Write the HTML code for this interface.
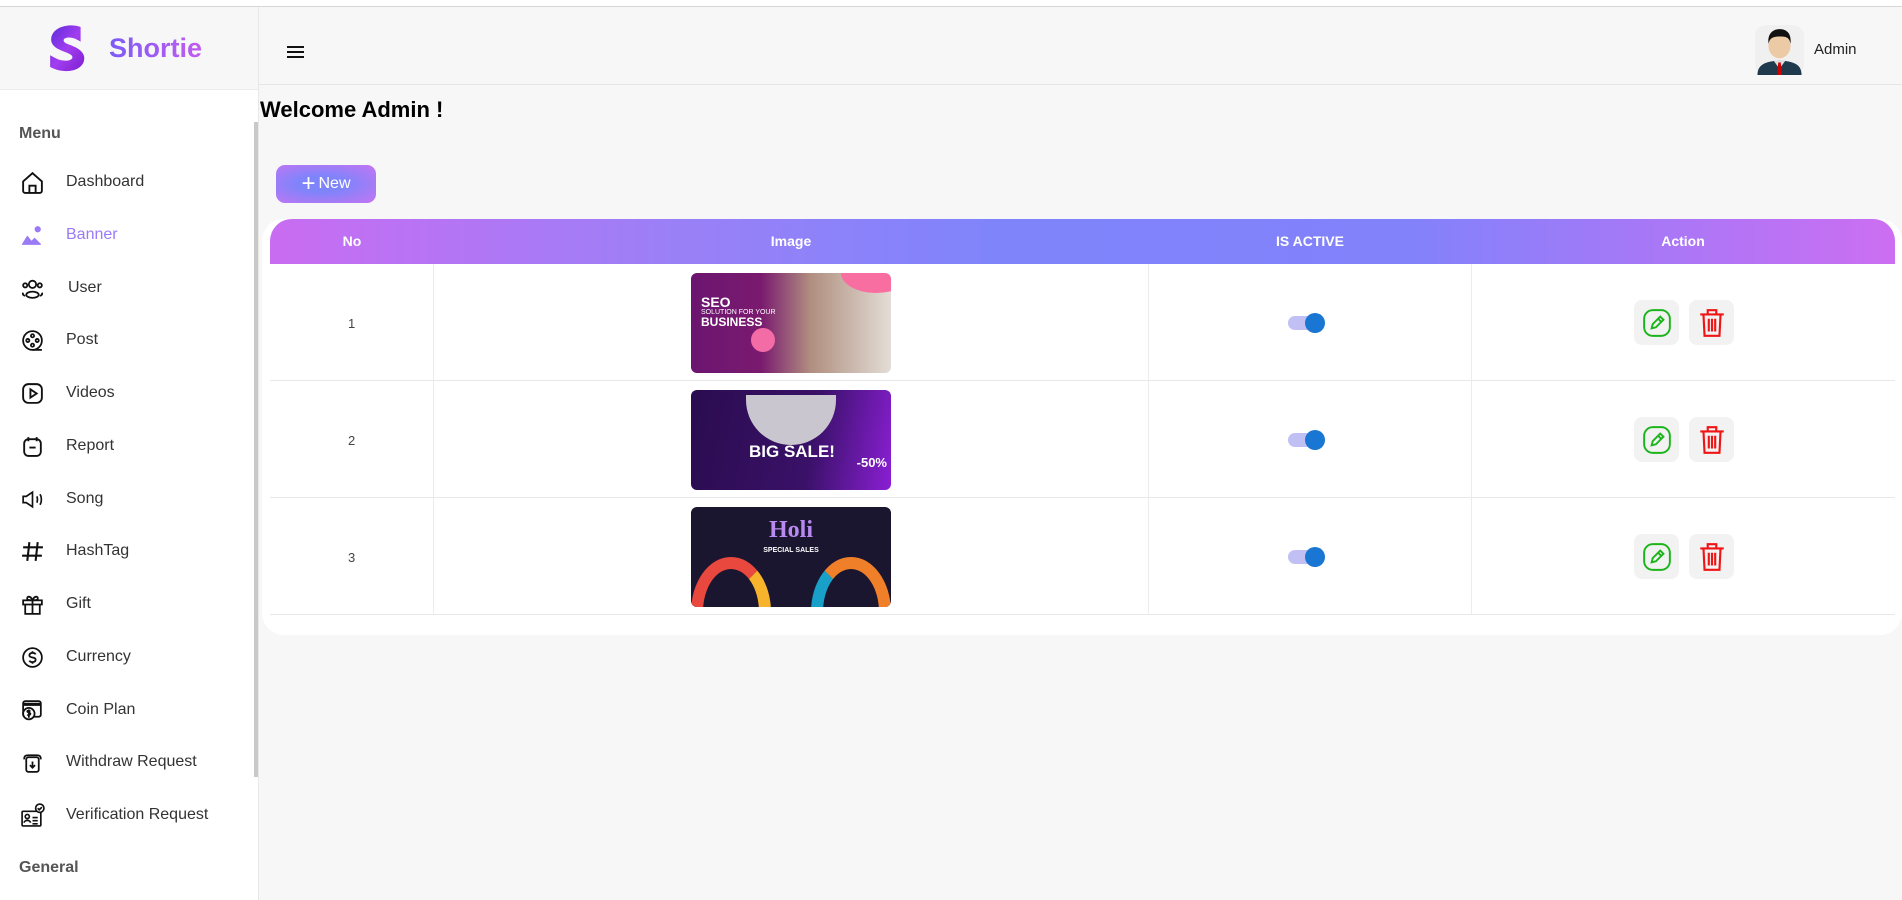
<!DOCTYPE html>
<html><head><meta charset="utf-8"><style>
*{box-sizing:border-box;margin:0;padding:0}
body{width:1902px;height:900px;overflow:hidden;background:#f7f7f7;font-family:"Liberation Sans",Arial,sans-serif;position:relative}
.topline{position:absolute;left:0;top:0;width:1902px;height:7px;background:#fff;border-bottom:1px solid #d6d6d6}
.side{position:absolute;left:0;top:7px;width:259px;height:893px;background:#fff;border-right:1px solid #e8e8e8}
.logo{height:83px;background:#f7f7f7;border-bottom:1px solid #ececec;position:relative}
.logo .t{position:absolute;left:109px;top:26px;font-size:27px;font-weight:bold;background:linear-gradient(90deg,#7b5cf6,#c25cf0);-webkit-background-clip:text;color:transparent}
.scroll{position:absolute;left:254px;top:115px;width:4px;height:655px;background:#c8c8c8}
.sec{position:absolute;left:19px;font-size:16px;font-weight:bold;color:#555}
.it{position:absolute;left:20px;height:26px;display:flex;align-items:center;font-size:16px;color:#333}
.it svg{width:25px;height:25px;margin-right:21px}
.it.act{color:#9b7af5}
.hdr{position:absolute;left:259px;top:7px;right:0;height:78px;border-bottom:1px solid #e6e6e6}
.card{position:absolute;left:262px;top:219px;width:1640px;height:416px;background:#fff;border-radius:22px}
.th{position:absolute;left:270px;top:219px;width:1625px;height:45px;border-radius:22px 22px 0 0;background:linear-gradient(90deg,#c96cf2 0%,#9a80f7 25%,#7f84fb 45%,#8282fb 70%,#cc6ef2 100%);color:#fff;font-weight:bold;font-size:14px}
.th span{position:absolute;top:14px;transform:translateX(-50%)}
.row{position:absolute;left:270px;width:1625px;height:117px;border-bottom:1px solid #e8e8e8;background:#fff}
.row .c{position:absolute;top:0;height:117px;border-left:1px solid #ececec}
.num{position:absolute;left:78px;top:52px;font-size:13px;color:#444}
.img{position:absolute;left:421px;top:9px;width:200px;height:100px;border-radius:6px;overflow:hidden}
.tg{position:absolute;left:1018px;top:52px;width:34px;height:14px;border-radius:7px;background:#c0c0f5}
.tg::after{content:"";position:absolute;right:-3px;top:-3px;width:20px;height:20px;border-radius:50%;background:#1976d2}
.ab{position:absolute;top:36px;width:45px;height:45px;border-radius:8px;background:#f2f2f2;display:flex;align-items:center;justify-content:center}
</style></head><body>
<div class="topline"></div>
<div class="side">
 <div class="logo">
  <svg style="position:absolute;left:47px;top:16px" width="42" height="52" viewBox="0 0 40 48"><defs><linearGradient id="lg" x1="0" y1="0" x2="1" y2="1"><stop offset="0" stop-color="#5b2bd8"/><stop offset=".5" stop-color="#a23ef0"/><stop offset="1" stop-color="#7c1fd0"/></linearGradient></defs><path d="M32 3C21-1 5 3 4 14c-1 10 13 12 18 15 5 3 1 7-6 6-5 0-9-3-13-5l0 11c10 6 28 6 32-5 3-10-8-14-16-17-5-2-4-6 2-6 4 0 8 2 11 4z" fill="url(#lg)"/></svg>
  <div class="t">Shortie</div>
 </div>
 <div class="scroll"></div>
 <div class="sec" style="top:118px">Menu</div>
 <div class="it" style="top:162px"><svg viewBox="0 0 24 24" fill="none" stroke="#111" stroke-width="1.8"><path d="M3 11l9-8 9 8v9a2 2 0 0 1-2 2H5a2 2 0 0 1-2-2z"/><path d="M9 22v-7h6v7"/></svg>Dashboard</div>
 <div class="it act" style="top:215px"><svg viewBox="0 0 24 24" fill="#9b7af5"><circle cx="17" cy="6" r="3"/><path d="M2 20l5-8 4 5 3-3 6 6v1H2z"/></svg>Banner</div>
 <div class="it" style="top:268px"><svg viewBox="0 0 24 24" fill="none" stroke="#111" stroke-width="1.7"><circle cx="12" cy="8" r="3.5"/><circle cx="5" cy="9" r="2"/><circle cx="19" cy="9" r="2"/><ellipse cx="12" cy="18" rx="6" ry="3"/><path d="M3 16c-1 2 1 3 2 3M21 16c1 2-1 3-2 3"/></svg><span style="margin-left:2px">User</span></div>
 <div class="it" style="top:320px"><svg viewBox="0 0 24 24" fill="none" stroke="#111" stroke-width="1.7"><circle cx="12" cy="12" r="9"/><circle cx="12" cy="7.5" r="1.5"/><circle cx="12" cy="16.5" r="1.5"/><circle cx="7.5" cy="12" r="1.5"/><circle cx="16.5" cy="12" r="1.5"/><path d="M12 21h9"/></svg>Post</div>
 <div class="it" style="top:373px"><svg viewBox="0 0 24 24" fill="none" stroke="#111" stroke-width="1.8"><rect x="3" y="3" width="18" height="18" rx="5"/><path d="M10 8l6 4-6 4z"/></svg>Videos</div>
 <div class="it" style="top:426px"><svg viewBox="0 0 24 24" fill="none" stroke="#111" stroke-width="1.8"><rect x="4" y="5" width="16" height="16" rx="4"/><path d="M8 3v4M16 3v4M9 13h6"/></svg>Report</div>
 <div class="it" style="top:479px"><svg viewBox="0 0 24 24" fill="none" stroke="#111" stroke-width="1.6"><path d="M3 9h3l6-4v14l-6-4H3z"/><path d="M16 9c1 1 1 5 0 6M19 7c2 2 2 8 0 10"/></svg>Song</div>
 <div class="it" style="top:531px"><svg viewBox="0 0 24 24" fill="none" stroke="#111" stroke-width="2"><path d="M9 3L7 21M17 3l-2 18M3 8h19M2 16h19"/></svg>HashTag</div>
 <div class="it" style="top:584px"><svg viewBox="0 0 24 24" fill="none" stroke="#111" stroke-width="1.7"><rect x="3" y="8" width="18" height="4"/><path d="M5 12v9h14v-9M12 8v13M12 8C10 3 6 4 7 7c1 1 5 1 5 1zM12 8c2-5 6-4 5-1-1 1-5 1-5 1z"/></svg>Gift</div>
 <div class="it" style="top:637px"><svg viewBox="0 0 24 24" fill="none" stroke="#111" stroke-width="1.7"><circle cx="12" cy="12" r="9"/><path d="M15 9c-1-2-6-2-6 1s6 1 6 4-5 3-6 1M12 6v2M12 16v2"/></svg>Currency</div>
 <div class="it" style="top:690px"><svg viewBox="0 0 24 24" fill="none" stroke="#111" stroke-width="1.7"><rect x="3" y="3" width="17" height="15" rx="2"/><path d="M3 6h17" stroke-width="3"/><circle cx="8.5" cy="15" r="5.5" fill="#fff"/><path d="M10 13c-1-1-3-1-3 0s3 1 3 2-2 2-3 1M8.5 11v8"/></svg>Coin Plan</div>
 <div class="it" style="top:742px"><svg viewBox="0 0 24 24" fill="none" stroke="#111" stroke-width="1.7"><path d="M4 9c0-3 1-4 4-4h8c3 0 4 1 4 4"/><rect x="6" y="7" width="12" height="14" rx="2"/><path d="M12 11v6M9.5 14.5L12 17l2.5-2.5"/></svg>Withdraw Request</div>
 <div class="it" style="top:795px"><svg viewBox="0 0 24 24" fill="none" stroke="#111" stroke-width="1.6"><rect x="2" y="8" width="18" height="14" rx="1"/><circle cx="7" cy="13" r="2"/><path d="M4 19c0-3 6-3 6 0M12 14h5M12 17h5M12 20h5"/><circle cx="19" cy="5" r="4" fill="#fff"/><path d="M17 5l1.5 1.5L21 4"/></svg>Verification Request</div>
 <div class="sec" style="top:852px">General</div>
</div>
<div class="hdr">
 <svg style="position:absolute;left:27px;top:38px" width="20" height="14" viewBox="0 0 20 14"><path d="M1 2h17M1 7h17M1 12h17" stroke="#111" stroke-width="2"/></svg>
 <svg style="position:absolute;left:1496px;top:18px" width="49" height="50" viewBox="0 0 40 48" preserveAspectRatio="none"><rect width="40" height="48" rx="10" fill="#f0f0f0"/><path d="M2 48c0-10 6-13 18-14 12 1 18 4 18 14z" fill="#1f3a4d"/><path d="M15 34l5 8 5-8z" fill="#ddd"/><path d="M19 36h2l1 12h-4z" fill="#c00"/><ellipse cx="20" cy="20" rx="9" ry="12" fill="#eccaa5"/><path d="M11 18c-1-10 4-14 9-14s10 3 9 14c-1-6-3-7-9-7s-8 2-9 7z" fill="#111"/></svg>
 <div style="position:absolute;left:1555px;top:34px;font-size:15px;color:#222">Admin</div>
</div>
<div style="position:absolute;left:260px;top:97px;font-size:22px;font-weight:bold;color:#000">Welcome Admin !</div>
<div style="position:absolute;left:276px;top:165px;width:100px;height:38px;border-radius:9px;background:radial-gradient(ellipse at 45% 50%,#7f84fb 30%,#c575f2 100%);color:#fff;font-size:16px;display:flex;align-items:center;justify-content:center"><span style="font-size:24px;font-weight:300;margin-right:3px;line-height:1">+</span>New</div>
<div class="card"></div>
<div class="th"><span style="left:82px">No</span><span style="left:521px">Image</span><span style="left:1040px">IS ACTIVE</span><span style="left:1413px">Action</span></div>

<div class="row" style="top:264px">
 <div class="c" style="left:163px"></div><div class="c" style="left:878px"></div><div class="c" style="left:1201px"></div>
 <div class="num">1</div>
 <div class="img" style="background:linear-gradient(90deg,#6b1570 0%,#7a1a6f 35%,#b08f80 60%,#e3ddd6 100%)">
  <div style="position:absolute;right:-20px;top:-20px;width:70px;height:40px;border-radius:50%;background:#f96ea0"></div>
  <div style="position:absolute;left:10px;top:22px;color:#fff;font-weight:bold;font-size:14px;line-height:1">SEO<div style="font-size:7px;font-weight:normal">SOLUTION FOR YOUR</div><div style="font-size:12px">BUSINESS</div></div>
  <div style="position:absolute;left:60px;top:55px;width:24px;height:24px;border-radius:50%;background:#f46ca6"></div>
 </div>
 <div class="tg"></div>
 <div class="ab" style="left:1364px"><svg width="30" height="30" viewBox="0 0 28 28" fill="none" stroke="#1bb51b" stroke-width="1.8"><rect x="2" y="2" width="24" height="24" rx="8"/><path d="M9 19l1-4 7-7 3 3-7 7z M15 10l3 3"/></svg></div>
 <div class="ab" style="left:1419px"><svg width="28" height="32" viewBox="0 0 26 30" fill="none" stroke="#f01414" stroke-width="2"><path d="M2 7h22M9 7V3h8v4M5 7l1 20h14l1-20M10 11v12M13 11v12M16 11v12"/></svg></div>
</div>

<div class="row" style="top:381px">
 <div class="c" style="left:163px"></div><div class="c" style="left:878px"></div><div class="c" style="left:1201px"></div>
 <div class="num">2</div>
 <div class="img" style="background:linear-gradient(100deg,#2a0c4f 0%,#3a1168 60%,#8a1fd4 100%)">
  <div style="position:absolute;left:55px;top:5px;width:90px;height:50px;border-radius:0 0 45px 45px;background:#c9c6cf"></div>
  <div style="position:absolute;left:58px;top:52px;color:#fff;font-weight:bold;font-size:17px">BIG SALE!</div>
  <div style="position:absolute;right:4px;top:65px;color:#fff;font-weight:bold;font-size:13px">-50%</div>
 </div>
 <div class="tg"></div>
 <div class="ab" style="left:1364px"><svg width="30" height="30" viewBox="0 0 28 28" fill="none" stroke="#1bb51b" stroke-width="1.8"><rect x="2" y="2" width="24" height="24" rx="8"/><path d="M9 19l1-4 7-7 3 3-7 7z M15 10l3 3"/></svg></div>
 <div class="ab" style="left:1419px"><svg width="28" height="32" viewBox="0 0 26 30" fill="none" stroke="#f01414" stroke-width="2"><path d="M2 7h22M9 7V3h8v4M5 7l1 20h14l1-20M10 11v12M13 11v12M16 11v12"/></svg></div>
</div>

<div class="row" style="top:498px">
 <div class="c" style="left:163px"></div><div class="c" style="left:878px"></div><div class="c" style="left:1201px"></div>
 <div class="num">3</div>
 <div class="img" style="background:#1a1630">
  <div style="position:absolute;left:0;bottom:-60px;width:80px;height:110px;border-radius:50%;border:12px solid #e8483d;border-right-color:#f7b32b"></div>
  <div style="position:absolute;right:0;bottom:-60px;width:80px;height:110px;border-radius:50%;border:12px solid #f07f2a;border-left-color:#19a0c9"></div>
  <div style="position:absolute;left:0;right:0;top:10px;text-align:center;color:#b989f0;font-weight:bold;font-size:24px;font-family:'Liberation Serif',serif">Holi</div>
  <div style="position:absolute;left:0;right:0;top:40px;text-align:center;color:#fff;font-size:7px;font-weight:bold">SPECIAL SALES</div>
 </div>
 <div class="tg"></div>
 <div class="ab" style="left:1364px"><svg width="30" height="30" viewBox="0 0 28 28" fill="none" stroke="#1bb51b" stroke-width="1.8"><rect x="2" y="2" width="24" height="24" rx="8"/><path d="M9 19l1-4 7-7 3 3-7 7z M15 10l3 3"/></svg></div>
 <div class="ab" style="left:1419px"><svg width="28" height="32" viewBox="0 0 26 30" fill="none" stroke="#f01414" stroke-width="2"><path d="M2 7h22M9 7V3h8v4M5 7l1 20h14l1-20M10 11v12M13 11v12M16 11v12"/></svg></div>
</div>
</body></html>
